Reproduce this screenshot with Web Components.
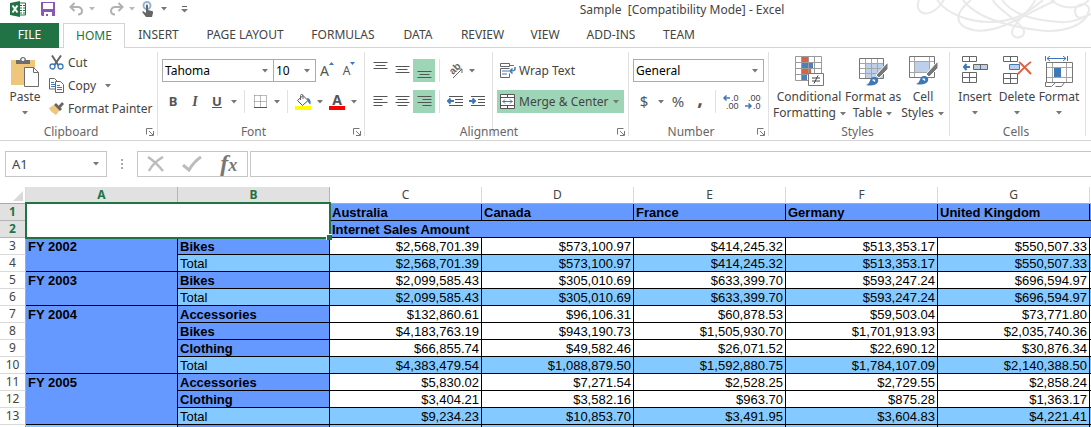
<!DOCTYPE html>
<html lang="en">
<head>
<meta charset="utf-8">
<title>Sample [Compatibility Mode] - Excel</title>
<style>
body { margin: 0; background: #fff; overflow: hidden; }
</style>
</head>
<body>
<xl-app></xl-app>
<script>
const ICONS = {
  excel: [16, 16, `<path d="M9 2h6.500v12H9z" fill="#fff" stroke="#217346"/><path d="M10 4.500h2M13 4.500h2M10 7h2M13 7h2M10 9.500h2M13 9.500h2M10 12h2M13 12h2" stroke="#217346"/><path d="M0 2L10 0v16L0 14z" fill="#217346"/><path d="M2.500 4.500l5 7M7.500 4.500l-5 7" stroke="#fff" stroke-width="2"/>`],
  save: [14, 14, `<path d="M0 0h14v14H1l-1-1z" fill="#8b57b0"/><path d="M2 1h10v6H2zM3 10h8v4H7v-2H5v2H3z" fill="#fff"/>`],
  undo: [15, 14, `<path d="M1.500 5h7a4 4 0 0 1 4.500 4c0 2-1.500 3.500-4 3.500M5.500 1l-4 4 4 4" fill="none" stroke="#b1b1b1" stroke-width="2"/>`],
  redo: [15, 14, `<path d="M13.500 5h-7a4 4 0 0 0-4.500 4c0 2 1.500 3.500 4 3.500M9.500 1l4 4-4 4" fill="none" stroke="#b1b1b1" stroke-width="2"/>`],
  touch: [12, 16, `<circle cx="5" cy="4.500" r="3.500" fill="none" stroke="#8fb4d6" stroke-width="2"/><path d="M4 4.500c0-1.300 2-1.300 2 0V9l4 1c1 .3 1.300 1 1 2l-1 4H4L.5 11.500c-.5-1 .7-1.500 1.500-.8l2 1.300z" fill="#666"/>`],
  custom: [7, 7, `<path d="M1 .5h5" stroke="#666"/><path d="M0 3h7L3.500 6.500z" fill="#777"/>`],
  flourish: [176, 40, `<g fill="none" stroke="#e9e9e9" stroke-width="2"><path d="M4 0C0 9 6 15 14 13C24 10 26 3 29 0"/><path d="M22 0C32 14 54 22 75 22C102 22 116 10 128 0"/><path d="M56 0C38 14 40 26 58 30C84 35 112 12 140 1"/><path d="M48 0C60 17 92 26 122 30C150 34 172 24 174 10C175 3 162 2 160 10C160 17 164 20 170 16"/><path d="M87 0C98 15 118 20 144 22C158 23 168 18 176 14"/><path d="M120 0C119 8 97 23 97 32C97 40 110 39 109 31C108 23 80 8 78 0"/><path d="M136 0C148 10 164 10 174 0"/></g>`],
  paste: [30, 31, `<path d="M1 4h24v25H1z" fill="#eec67c"/><path d="M6 8V4h4c0-4 6-4 6 0h4v4z" fill="#6d6d6d"/><circle cx="13" cy="3.500" r="1.500" fill="#fff"/><path d="M14.500 11.500h9l5 5v14h-14z" fill="#fff" stroke="#6d6d6d"/><path d="M23.500 11.500v5h5" fill="none" stroke="#6d6d6d"/>`],
  cut: [15, 15, `<path d="M3 .5l6.500 10M12 .5L5.500 10" stroke="#666" stroke-width="2"/><circle cx="3.500" cy="11.500" r="2.500" fill="#fff" stroke="#3f78b5" stroke-width="1.300"/><circle cx="11.500" cy="11.500" r="2.500" fill="#fff" stroke="#3f78b5" stroke-width="1.300"/>`],
  copy: [15, 15, `<path d="M.5.5h5l3 3v7.500h-8z" fill="#fff" stroke="#666"/><path d="M2 4.500h3M2 6.500h4M2 8.500h4" stroke="#3f78b5"/><path d="M6.500 3.500h5l3 3v8h-8z" fill="#fff" stroke="#666"/><path d="M8 7.500h3M8 9.500h5M8 11.500h5" stroke="#3f78b5"/>`],
  painter: [15, 13, `<path d="M0 6l5-3 6 5-4 5C4 11 1 9 0 6z" fill="#eec67c"/><path d="M5 3l2-2 6 6-2 2z" fill="#666"/><path d="M9 4.500L13 0l2 2-4 4.500z" fill="#666"/>`],
  up: [5, 3, `<path d="M0 3L2.500 0 5 3z" fill="#3f78b5"/>`],
  down: [5, 3, `<path d="M0 0L2.500 3 5 0z" fill="#3f78b5"/>`],
  borders: [13, 13, `<path d="M.5.5h12v12M.5.500v12M6.500.5v12M.5 6.500h12" fill="none" stroke="#777" stroke-dasharray="1 1"/><path d="M0 12.500h13" stroke="#555"/>`],
  bucket: [16, 16, `<path d="M2.500 6.500L8 1.500l5 5-5.500 5z" fill="#fff" stroke="#555"/><path d="M5.500 6V1.500c0-1.500 2.500-1.500 2.500 0V5" fill="none" stroke="#666"/><path d="M12 4c3 0 4 3 3.500 6.500C14 10 13 8 12.500 6z" fill="#3f78b5"/><path d="M0 12h16v4H0z" fill="#ff0"/>`],
  top: [15, 17, `<path d="M.5.5h14M2.500 3.500h10M.5 6.500h14" stroke="#555"/>`],
  middle: [15, 17, `<path d="M.5 4.500h14M2.500 7.500h10M.5 10.500h14" stroke="#555"/>`],
  bottom: [15, 17, `<path d="M.5 9.500h14M2.500 12.500h10M.5 15.500h14" stroke="#555"/>`],
  left: [15, 11, `<path d="M.5.5h14M.5 3.500h9M.5 6.500h14M.5 9.500h9" stroke="#555"/>`],
  center: [15, 11, `<path d="M.5.5h14M2.500 3.500h10M.5 6.500h14M2.500 9.500h10" stroke="#555"/>`],
  right: [15, 11, `<path d="M.5.5h14M5.500 3.500h9M.5 6.500h14M5.500 9.500h9" stroke="#555"/>`],
  outdent: [16, 11, `<path d="M2 .5h14M8 3.500h8M8 6.500h8M2 9.500h14" stroke="#555"/><path d="M1 5h6M3.500 2.500L1 5l2.500 2.500" fill="none" stroke="#3f78b5" stroke-width="2"/>`],
  indent: [16, 11, `<path d="M2 .5h14M9 3.500h7M9 6.500h7M2 9.500h14" stroke="#555"/><path d="M0 5h6M3.500 2.500L6 5 3.500 7.500" fill="none" stroke="#3f78b5" stroke-width="2"/>`],
  orient: [20, 19, `<text x="0" y="0" transform="translate(8 14) rotate(-45)" font-family="Liberation Sans" font-size="10" font-weight="700" fill="#666">ab</text><path d="M8 17l8.500-8.500M13 8h4v4" fill="none" stroke="#666"/>`],
  wrap: [16, 15, `<path d="M.5.5h9v3h-9zM.5 5.500h9M.5 5.500v9h9v-4" fill="none" stroke="#666"/><path d="M9 2.500h5M2 8h7M2 11h5" stroke="#3f78b5"/><path d="M15 4v2q0 2-5 2M12.500 5.500L10 8l2.500 2.500" fill="none" stroke="#3f78b5" stroke-width="1.500"/>`],
  merge: [15, 15, `<path d="M.5.5h14v14H.5zM.5 3.500h14M.5 11.500h14M7.500.5v3M7.500 11.500v3" fill="#fff" stroke="#555"/><path d="M2.500 7.500h10M5 5.500l-2 2 2 2M10 5.500l2 2-2 2" fill="none" stroke="#3f78b5"/>`],
  incdec: [18, 19, `<path d="M2 6h6M4.500 3.500L2 6l2.500 2.500" fill="none" stroke="#3f78b5" stroke-width="1.500"/><g font-family="Liberation Sans" font-size="9" fill="#444"><text x="9" y="9">.0</text><text x="4" y="17">.00</text></g>`],
  decdec: [18, 19, `<path d="M1 14h6M4.500 11.500L7 14l-2.500 2.500" fill="none" stroke="#3f78b5" stroke-width="1.500"/><g font-family="Liberation Sans" font-size="9" fill="#444"><text x="4" y="9">.00</text><text x="9" y="17">.0</text></g>`],
  conditional: [30, 30, `<path d="M.5.500h27v24H.5z" fill="#fff"/><path d="M8 1h6v6H8zM8 13h9v6H8z" fill="#dc6143"/><path d="M8 7h11v6H8zM8 19h5v6H8z" fill="#4a80bb"/><path d="M1.500.5h26v24h-26zM7.500.5v24M14.500.5v24M20.500.5v24M1.500 6.500h26M1.500 12.500h26M1.500 18.500h26" fill="none" stroke="#9a9a9a"/><path d="M14.500 17.500h15v12h-15z" fill="#fff" stroke="#777"/><path d="M18 22h8M18 25h8M24 19.500l-4 8" stroke="#444"/>`],
  fmttable: [30, 30, `<path d="M8 7h18v15H8z" fill="#bdd0e9"/><path d="M7.500 2.500v20M13.500 2.500v20M19.500 2.500v20M1.500 7.500h24M1.500 12.500h24M1.500 17.500h24" fill="none" stroke="#a6a6a6"/><path d="M1.500 2.500h24v20h-24z" fill="none" stroke="#777"/><path d="M18 19L29 7h1v6l-9 9z" fill="#777" stroke="#fff"/><path d="M8 29c5-1 3-8 8-8 3 0 5 2 4 5-2 4-8 4-12 3z" fill="#3f78b5"/><path d="M14 24c2-2 4 0 3 2z" fill="#fff"/>`],
  cellstyles: [30, 30, `<path d="M6 6h15v10H6z" fill="#bdd0e9"/><path d="M1.500 5.500h25M1.500 16.500h25M6.500.5v21M21.500.5v21" fill="none" stroke="#a6a6a6"/><path d="M1.500.5h25v21h-25z" fill="none" stroke="#777"/><path d="M18 18L29 6h1v6l-9 9z" fill="#777" stroke="#fff"/><path d="M8 28c5-1 3-8 8-8 3 0 5 2 4 5-2 4-8 4-12 3z" fill="#3f78b5"/><path d="M14 23c2-2 4 0 3 2z" fill="#fff"/>`],
  insert: [28, 28, `<path d="M1.500.5h14v5h-14zM8.500.5v5M1.500 16.500h14v10h-14zM8.500 16.500v10M1.500 21.500h14" fill="#fff" stroke="#666"/><path d="M12.500 8.500h14v5h-14zM19.500 8.500v5" fill="#bdd0e9" stroke="#666"/><path d="M3 11h6M5.500 8L3 11l2.500 3" fill="none" stroke="#3f78b5" stroke-width="2"/>`],
  delete: [30, 28, `<path d="M1.500.5h14v5h-14zM8.500.5v5M1.500 17.500h14v10h-14zM8.500 17.500v10M1.500 22.500h14" fill="#fff" stroke="#666"/><path d="M7.500 8.500h10v5h-10z" fill="#bdd0e9" stroke="#3f78b5"/><path d="M17 6c4 3 8 8 12 12M29 6c-5 3-9 8-13 12" fill="none" stroke="#dc6143" stroke-width="2"/>`],
  format: [28, 31, `<path d="M7.500 6.500v20M21.500 6.500v20M1.500 11.500h26M1.500 21.500h26" stroke="#a6a6a6"/><path d="M.5 0v5M22.500 0v5M2 2.500h19M5 0L2 2.500 5 5M18 0l3 2.500L18 5" fill="none" stroke="#3f78b5"/><path d="M1.500 6.500h26v20h-26zM.5 26v4.500h6l4-4M10.500 30.500h6l3-4" fill="none" stroke="#777"/><path d="M9 12h7v9H9z" fill="#3f78b5"/>`],
  launcher: [8, 8, `<path d="M.5 6.500v-6h6M3 3l4 4M7.500 3v4.500H3" fill="none" stroke="#777"/>`],
  cancel: [18, 16, `<path d="M1 1c6 4 10 8 15 14M16 1C9 5 5 9 2 15" fill="none" stroke="#bcbcbc" stroke-width="2.500"/>`],
  enter: [20, 16, `<path d="M1 9l6 5C10 9 14 4 19 1" fill="none" stroke="#bcbcbc" stroke-width="3"/>`],
  caret: [7, 4, `<path d="M0 0h6L3 3.500z" fill="#777"/>`]
};

function define(name, css, html, setup) {
  const template = document.createElement("template");
  template.innerHTML = `<style>*{box-sizing:border-box}button{font:inherit;color:inherit;border:0;background:none;padding:0;margin:0}${css}</style>${html}`;
  customElements.define(name, class extends HTMLElement {
    constructor() {
      super();
      this.attachShadow({ mode: "open" }).append(template.content.cloneNode(true));
    }
    connectedCallback() { if (setup) setup(this, this.shadowRoot); }
  });
}

define("xl-icon", `:host{display:inline-flex;flex:none}svg{display:block}`, `<span id="art"></span>`, (host, root) => {
  const [w, h, body] = ICONS[host.getAttribute("name")];
  root.getElementById("art").innerHTML = `<svg width="${w}" height="${h}" viewBox="0 0 ${w} ${h}" aria-hidden="true">${body}</svg>`;
});

/* Small square command in a ribbon row; "arrow" makes it the narrow drop-down part. */
define("xl-tool", `:host{display:block;flex:none;width:22px;height:23px}
  :host([arrow]){width:12px}
  :host([on]){background:#9fd5b7}
  button{width:100%;height:100%;display:flex;align-items:center;justify-content:center;line-height:23px}`,
  `<button type="button"><slot></slot></button>`,
  (host, root) => root.querySelector("button").setAttribute("aria-label", host.getAttribute("label") || "More options"));

/* Command with an icon and a text beside it. */
define("xl-command", `:host{display:block}
  :host([on]){background:#9fd5b7}
  button{width:100%;height:23px;display:flex;align-items:center;gap:4px;padding-left:3px;white-space:nowrap;text-align:left}
  .icon{width:15px;display:flex;justify-content:center}
  .end{margin-left:auto;display:flex;padding-right:4px}
  .end:not(.used){display:none}`,
  `<button type="button"><span class="icon"><slot name="icon"></slot></span><slot></slot><span class="end"><slot name="end"></slot></span></button>`,
  (host, root) => root.querySelector(".end").classList.toggle("used", host.hasAttribute("menu")));

/* Tall command: icon on top, one or two lines of text below. */
define("xl-large", `:host{display:block;flex:none}
  button{width:100%;display:block;padding-top:8px;line-height:16px;white-space:nowrap;text-align:center}
  .icon{height:33px;display:flex;justify-content:center;align-items:flex-start}`,
  `<button type="button"><span class="icon"><slot name="icon"></slot></span><slot></slot></button>`);

define("xl-rule", `:host{display:block;flex:none;width:9px;height:23px;background:linear-gradient(#e1e1e1,#e1e1e1) 4px 0/1px 100% no-repeat}`, ``);

define("xl-rows", `:host{display:grid;row-gap:8px;padding-top:11px;align-content:start}
  ::slotted(div){display:flex}`, `<slot></slot>`);

define("xl-combo", `:host{display:grid;flex:none;height:23px;border:1px solid #ababab;color:#000}
  select{grid-area:1/1;appearance:none;border:0;background:none;font:inherit;color:inherit;padding:0 2px;margin:0;width:100%;min-width:0;outline:0}
  xl-icon{grid-area:1/1;justify-self:end;align-self:center;margin-right:4px;pointer-events:none}`,
  `<select><option></option></select><xl-icon name="caret"></xl-icon>`,
  (host, root) => {
    root.querySelector("option").textContent = host.getAttribute("value");
    root.querySelector("select").setAttribute("aria-label", host.getAttribute("label"));
  });

define("xl-group", `:host{display:grid;grid-template:76px 16px/minmax(0,1fr);flex:none;background:linear-gradient(#e1e1e1,#e1e1e1) right 4px/1px 84px no-repeat}
  .body{display:flex;padding:0 5px 0 4px}
  .foot{display:flex;align-items:center;line-height:16px;color:#666;padding-right:4px}
  .foot span{flex:1;text-align:center;padding-right:4px}
  :host([plain]) .foot{padding-right:0}
  button{display:flex}`,
  `<div class="body"><slot></slot></div><div class="foot"><span></span><button type="button" aria-label="More settings"><xl-icon name="launcher"></xl-icon></button></div>`,
  (host, root) => {
    root.querySelector("span").textContent = host.getAttribute("label");
    if (host.hasAttribute("plain")) root.querySelector("button").remove();
  });

define("xl-titlebar", `:host{display:grid;grid-template-columns:273px 1fr;height:23px;position:relative}
  .quick{display:flex;align-items:flex-start;padding:1px 0 0 10px}
  .quick button{display:flex;align-items:center;justify-content:center;height:16px}
  .logo{width:30px;height:16px}.wide{width:16px}.arrow{width:24px}
  h1{margin:0;font-size:12px;font-weight:400;line-height:20px;text-align:center;white-space:pre;color:#444}
  .art{position:absolute;right:0;top:0}`,
  `<div class="art"><xl-icon name="flourish"></xl-icon></div>
  <div class="quick"><xl-icon class="logo" name="excel"></xl-icon>
  <button class="wide" aria-label="Save"><xl-icon name="save"></xl-icon></button><span style="width:12px"></span>
  <button class="wide" aria-label="Undo"><xl-icon name="undo"></xl-icon></button>
  <button aria-label="Undo list" style="width:16px;opacity:.5"><xl-icon name="caret"></xl-icon></button><span style="width:8px"></span>
  <button class="wide" aria-label="Redo"><xl-icon name="redo"></xl-icon></button>
  <button aria-label="Redo list" style="width:16px;opacity:.5"><xl-icon name="caret"></xl-icon></button>
  <button class="wide" aria-label="Touch mode"><xl-icon name="touch"></xl-icon></button>
  <button aria-label="Touch mode list" style="width:16px"><xl-icon name="caret"></xl-icon></button>
  <button class="arrow" aria-label="Customize toolbar"><xl-icon name="custom"></xl-icon></button></div>
  <h1>Sample  [Compatibility Mode] - Excel</h1>`);

define("xl-tabs", `:host{display:grid;grid-template-columns:59px 4px 62px 67px 106px 90px 60px 69px 56px 76px 60px 1fr;height:25px;position:relative}
  a{color:#444;text-decoration:none;text-align:center;line-height:24px;white-space:nowrap;border-bottom:1px solid #d4d4d4}
  i{border-bottom:1px solid #d4d4d4}
  .file{background:#217346;border-color:#217346;color:#fff}
  .active{color:#217346;border:1px solid #d4d4d4;border-bottom:0;line-height:23px}`,
  `<a class="file" href="#">FILE</a><i></i><a class="active" href="#">HOME</a><a href="#">INSERT</a><a href="#">PAGE LAYOUT</a><a href="#">FORMULAS</a><a href="#">DATA</a><a href="#">REVIEW</a><a href="#">VIEW</a><a href="#">ADD-INS</a><a href="#">TEAM</a><i></i>`);

define("xl-ribbon", `:host{display:flex;border-bottom:1px solid #d4d4d4}
  .glyph{font-size:13px;font-weight:700;color:#555}
  .serif{font-family:"Liberation Serif",serif;font-style:italic;font-size:14px}
  .symbol{font-size:15px;color:#555}
  .comma{font-size:20px;font-weight:700;color:#555;padding-bottom:8px}
  .sup{align-self:flex-start;padding-top:3px}
  .fontcolor{display:block;width:16px;height:16px;line-height:12px;border-bottom:4px solid #f00;font-size:14px;font-weight:700;color:#555;text-align:center}
  .big{color:#555;font-size:14px}.mid{color:#555;font-size:12px}
  .stack{padding-top:3px}
  .carets{display:inline-block;margin-left:4px;vertical-align:middle}
  .low{display:grid;place-items:center;height:16px}`,
  `<xl-group label="Clipboard" style="width:158px">
    <xl-large style="width:42px"><xl-icon slot="icon" name="paste"></xl-icon>Paste<span class="low"><xl-icon name="caret"></xl-icon></span></xl-large>
    <div class="stack">
      <xl-command><xl-icon slot="icon" name="cut"></xl-icon>Cut</xl-command>
      <xl-command><xl-icon slot="icon" name="copy"></xl-icon>Copy<xl-icon name="caret" style="margin-left:5px"></xl-icon></xl-command>
      <xl-command><xl-icon slot="icon" name="painter"></xl-icon>Format Painter</xl-command>
    </div>
  </xl-group>
  <xl-group label="Font" style="width:207px">
    <xl-rows>
      <div><xl-combo label="Font" value="Tahoma" style="width:112px"></xl-combo><xl-combo label="Font size" value="10" style="width:43px;margin-left:-1px"></xl-combo>
        <xl-tool label="Increase font size"><span class="big">A</span><xl-icon class="sup" name="up"></xl-icon></xl-tool>
        <xl-tool label="Decrease font size"><span class="mid">A</span><xl-icon class="sup" name="down"></xl-icon></xl-tool></div>
      <div><xl-tool label="Bold"><span class="glyph">B</span></xl-tool><xl-tool label="Italic"><span class="glyph serif">I</span></xl-tool><xl-tool label="Underline"><span class="glyph"><u>U</u></span></xl-tool><xl-tool arrow><xl-icon name="caret"></xl-icon></xl-tool>
        <xl-rule></xl-rule><xl-tool label="Borders"><xl-icon name="borders"></xl-icon></xl-tool><xl-tool arrow><xl-icon name="caret"></xl-icon></xl-tool>
        <xl-rule></xl-rule><xl-tool label="Fill color"><xl-icon name="bucket"></xl-icon></xl-tool><xl-tool arrow><xl-icon name="caret"></xl-icon></xl-tool>
        <xl-tool label="Font color"><span class="fontcolor">A</span></xl-tool><xl-tool arrow><xl-icon name="caret"></xl-icon></xl-tool></div>
    </xl-rows>
  </xl-group>
  <xl-group label="Alignment" style="width:264px">
    <xl-rows style="width:119px">
      <div><xl-tool label="Top align"><xl-icon name="top"></xl-icon></xl-tool><xl-tool label="Middle align"><xl-icon name="middle"></xl-icon></xl-tool><xl-tool on label="Bottom align"><xl-icon name="bottom"></xl-icon></xl-tool><xl-rule></xl-rule>
        <xl-tool label="Orientation"><xl-icon name="orient"></xl-icon></xl-tool><xl-tool arrow><xl-icon name="caret"></xl-icon></xl-tool></div>
      <div><xl-tool label="Align left"><xl-icon name="left"></xl-icon></xl-tool><xl-tool label="Center"><xl-icon name="center"></xl-icon></xl-tool><xl-tool on label="Align right"><xl-icon name="right"></xl-icon></xl-tool><xl-rule></xl-rule>
        <xl-tool label="Decrease indent"><xl-icon name="outdent"></xl-icon></xl-tool><xl-tool label="Increase indent"><xl-icon name="indent"></xl-icon></xl-tool></div>
    </xl-rows>
    <xl-rule style="height:84px;margin-top:4px"></xl-rule>
    <xl-rows style="width:127px">
      <xl-command><xl-icon slot="icon" name="wrap"></xl-icon>Wrap Text</xl-command>
      <xl-command on menu><xl-icon slot="icon" name="merge"></xl-icon>Merge &amp; Center<xl-icon slot="end" name="caret"></xl-icon></xl-command>
    </xl-rows>
  </xl-group>
  <xl-group label="Number" style="width:140px">
    <xl-rows>
      <div><xl-combo label="Number format" value="General" style="width:131px"></xl-combo></div>
      <div><xl-tool label="Currency"><span class="symbol">$</span></xl-tool><xl-tool arrow><xl-icon name="caret"></xl-icon></xl-tool><xl-tool label="Percent"><span class="symbol">%</span></xl-tool><xl-tool label="Comma style"><span class="comma">,</span></xl-tool><xl-rule></xl-rule>
        <xl-tool label="Increase decimal"><xl-icon name="incdec"></xl-icon></xl-tool><xl-tool label="Decrease decimal"><xl-icon name="decdec"></xl-icon></xl-tool></div>
    </xl-rows>
  </xl-group>
  <xl-group plain label="Styles" style="width:181px">
    <xl-large style="width:72px"><xl-icon slot="icon" name="conditional"></xl-icon>Conditional<br>Formatting<xl-icon class="carets" name="caret"></xl-icon></xl-large>
    <xl-large style="width:56px"><xl-icon slot="icon" name="fmttable"></xl-icon>Format as<br>Table<xl-icon class="carets" name="caret"></xl-icon></xl-large>
    <xl-large style="width:44px"><xl-icon slot="icon" name="cellstyles"></xl-icon>Cell<br>Styles<xl-icon class="carets" name="caret"></xl-icon></xl-large>
  </xl-group>
  <xl-group plain label="Cells" style="width:136px">
    <xl-large style="width:42px"><xl-icon slot="icon" name="insert"></xl-icon>Insert<span class="low"><xl-icon name="caret"></xl-icon></span></xl-large>
    <xl-large style="width:42px"><xl-icon slot="icon" name="delete"></xl-icon>Delete<span class="low"><xl-icon name="caret"></xl-icon></span></xl-large>
    <xl-large style="width:42px"><xl-icon slot="icon" name="format"></xl-icon>Format<span class="low"><xl-icon name="caret"></xl-icon></span></xl-large>
  </xl-group>`);

define("xl-formula-bar", `:host{display:grid;grid-template-columns:102px 30px 111px 1fr;padding:10px 0 10px 5px}
  .box{height:26px;border:1px solid #c6c6c6;display:flex;align-items:center}
  input{font:inherit;font-size:13px;color:#444;border:0;background:none;outline:0;min-width:0;width:100%;padding:0 6px}
  .name button{display:flex;padding-right:6px}
  .dots{display:grid;place-items:center}
  .tools{justify-content:space-around}
  .tools button{width:36px;height:24px;display:flex;align-items:center;justify-content:center}
  .fx{font:italic 700 24px/24px "Liberation Serif",serif;color:#777}
  .fx small{font-size:18px}
  .formula{margin-left:2px;border-right:0}`,
  `<div class="box name"><input aria-label="Name box" value="A1"><button aria-label="Name list"><xl-icon name="caret"></xl-icon></button></div>
  <div class="dots"><svg width="2" height="10" aria-hidden="true"><path d="M0 0h2v2H0zM0 4h2v2H0zM0 8h2v2H0z" fill="#aaa"/></svg></div>
  <div class="box tools"><button aria-label="Cancel"><xl-icon name="cancel"></xl-icon></button><button aria-label="Enter"><xl-icon name="enter"></xl-icon></button><button aria-label="Insert function"><span class="fx">f<small>x</small></span></button></div>
  <div class="box formula"><input aria-label="Formula"></div>`);

const ROWS = [
  ["FY 2002", 2, "Bikes", "$2,568,701.39", "$573,100.97", "$414,245.32", "$513,353.17", "$550,507.33"],
  [0, 0, "Total", "$2,568,701.39", "$573,100.97", "$414,245.32", "$513,353.17", "$550,507.33"],
  ["FY 2003", 2, "Bikes", "$2,099,585.43", "$305,010.69", "$633,399.70", "$593,247.24", "$696,594.97"],
  [0, 0, "Total", "$2,099,585.43", "$305,010.69", "$633,399.70", "$593,247.24", "$696,594.97"],
  ["FY 2004", 4, "Accessories", "$132,860.61", "$96,106.31", "$60,878.53", "$59,503.04", "$73,771.80"],
  [0, 0, "Bikes", "$4,183,763.19", "$943,190.73", "$1,505,930.70", "$1,701,913.93", "$2,035,740.36"],
  [0, 0, "Clothing", "$66,855.74", "$49,582.46", "$26,071.52", "$22,690.12", "$30,876.34"],
  [0, 0, "Total", "$4,383,479.54", "$1,088,879.50", "$1,592,880.75", "$1,784,107.09", "$2,140,388.50"],
  ["FY 2005", 3, "Accessories", "$5,830.02", "$7,271.54", "$2,528.25", "$2,729.55", "$2,858.24"],
  [0, 0, "Clothing", "$3,404.21", "$3,582.16", "$963.70", "$875.28", "$1,363.17"],
  [0, 0, "Total", "$9,234.23", "$10,853.70", "$3,491.95", "$3,604.83", "$4,221.41"]
];

const bodyRows = ROWS.map(([year, span, name, ...sums], i) =>
  `<tr class="${name === "Total" ? "total" : ""}"><th class="row" scope="row">${i + 3}</th>${year ? `<td class="head" rowspan="${span}">${year}</td>` : ""}<td class="${name === "Total" ? "" : "head"}">${name}</td>${sums.map(s => `<td class="num">${s}</td>`).join("")}<td class="rest"></td></tr>`).join("");

define("xl-sheet", `:host{display:block}
  table{width:100%;min-width:1091px;table-layout:fixed;border-collapse:separate;border-spacing:0;font:13px/15px "Liberation Sans",Arial,sans-serif;color:#000}
  .hd{width:26px}.col{width:152px}
  tr{height:17px}
  th,td{padding:1px 2px 0;height:17px;border:0 solid #000;border-width:0 1px 1px 0;white-space:nowrap;vertical-align:top;text-align:left}
  thead th,th.row{font:12px/16px "Noto Sans","Open Sans",sans-serif;color:#444;text-align:center;padding:0;border-color:#dadada}
  thead th{border-bottom-color:#ababab}
  th.row{border-right-color:#ababab}
  thead th.on,th.row.on{background:#e1e1e1;color:#217346;font-weight:700;border-color:#b5b5b5}
  .corner svg{display:block;margin:4px 0 0 13px}
  .head{background:#6699ff;font-weight:700}
  .total td:not(.head){background:#84c9ff}
  .num{text-align:right}
  .rest{padding:0;border-right:0}
  .wide{border-right:0}
  .cursor{position:relative;background:#fff;border:0}
  .cursor::before{content:"";position:absolute;inset:-2px -1px -1px -1px;border:2px solid #217346;pointer-events:none}
  .cursor::after{content:"";position:absolute;right:-2px;bottom:-2px;width:5px;height:5px;background:#217346;border:solid #fff;border-width:1px 0 0 1px;box-sizing:content-box}`,
  `<table aria-label="Internet sales"><colgroup><col class="hd"><col class="col"><col class="col"><col class="col"><col class="col"><col class="col"><col class="col"><col class="col"><col></colgroup>
  <thead><tr><th class="corner"><svg width="10" height="10" aria-hidden="true"><path d="M10 0v10H0z" fill="#dadada"/></svg></th><th class="on">A</th><th class="on">B</th><th>C</th><th>D</th><th>E</th><th>F</th><th>G</th><th class="rest"></th></tr></thead>
  <tbody><tr><th class="row on" scope="row">1</th><td class="cursor" colspan="2" rowspan="2"></td><td class="head">Australia</td><td class="head">Canada</td><td class="head">France</td><td class="head">Germany</td><td class="head">United Kingdom</td><td class="head rest"></td></tr>
  <tr><th class="row on" scope="row">2</th><td class="head wide" colspan="6">Internet Sales Amount</td></tr>
  ${bodyRows}
  <tr class="total"><th class="row"></th><td></td><td class="head"></td><td></td><td></td><td></td><td></td><td></td><td class="rest"></td></tr></tbody></table>`);

define("xl-app", `:host{display:block;height:100vh;overflow:hidden;font:12px/16px "Noto Sans","Open Sans",sans-serif;color:#444;background:#fff}`,
  `<xl-titlebar></xl-titlebar><xl-tabs></xl-tabs><xl-ribbon></xl-ribbon><xl-formula-bar></xl-formula-bar><xl-sheet></xl-sheet>`);
</script>
</body>
</html>
